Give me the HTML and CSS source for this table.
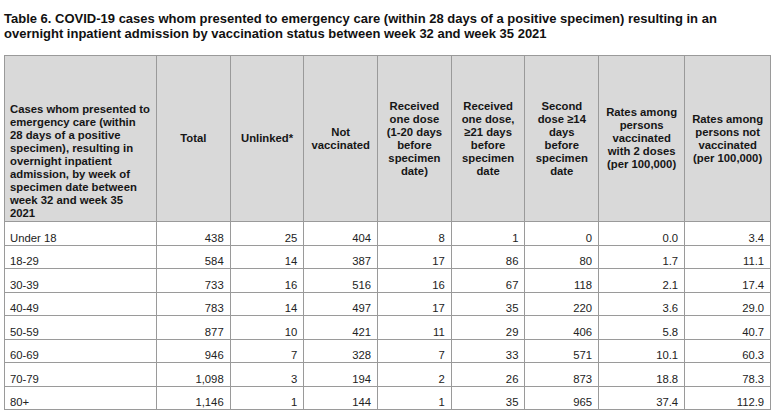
FILE: index.html
```html
<!DOCTYPE html>
<html lang="en">
<head>
<meta charset="utf-8">
<title>Table 6</title>
<link rel="stylesheet" href="styles.css">
</head>
<body>
<div class="page">
  <h1 class="title">Table 6. COVID-19 cases whom presented to emergency care (within 28 days of a positive specimen) resulting in an<br>overnight inpatient admission by vaccination status between week 32 and week 35 2021</h1>
  <table class="data">
    <colgroup>
      <col class="c-label">
      <col class="c-n">
      <col class="c-n">
      <col class="c-n">
      <col class="c-n">
      <col class="c-n">
      <col class="c-n">
      <col class="c-rate">
      <col class="c-rate">
    </colgroup>
    <thead>
      <tr class="head-row">
        <th class="h-label">Cases whom presented to<br>emergency care (within<br>28 days of a positive<br>specimen), resulting in<br>overnight inpatient<br>admission, by week of<br>specimen date between<br>week 32 and week 35<br>2021</th>
        <th>Total</th>
        <th>Unlinked*</th>
        <th>Not<br>vaccinated</th>
        <th>Received<br>one dose<br>(1-20 days<br>before<br>specimen<br>date)</th>
        <th>Received<br>one dose,<br>≥21 days<br>before<br>specimen<br>date</th>
        <th>Second<br>dose ≥14<br>days<br>before<br>specimen<br>date</th>
        <th>Rates among<br>persons<br>vaccinated<br>with 2 doses<br>(per 100,000)</th>
        <th>Rates among<br>persons not<br>vaccinated<br>(per 100,000)</th>
      </tr>
    </thead>
    <tbody>
      <tr><td class="label">Under 18</td><td>438</td><td>25</td><td>404</td><td>8</td><td>1</td><td>0</td><td>0.0</td><td>3.4</td></tr>
      <tr><td class="label">18-29</td><td>584</td><td>14</td><td>387</td><td>17</td><td>86</td><td>80</td><td>1.7</td><td>11.1</td></tr>
      <tr><td class="label">30-39</td><td>733</td><td>16</td><td>516</td><td>16</td><td>67</td><td>118</td><td>2.1</td><td>17.4</td></tr>
      <tr><td class="label">40-49</td><td>783</td><td>14</td><td>497</td><td>17</td><td>35</td><td>220</td><td>3.6</td><td>29.0</td></tr>
      <tr><td class="label">50-59</td><td>877</td><td>10</td><td>421</td><td>11</td><td>29</td><td>406</td><td>5.8</td><td>40.7</td></tr>
      <tr><td class="label">60-69</td><td>946</td><td>7</td><td>328</td><td>7</td><td>33</td><td>571</td><td>10.1</td><td>60.3</td></tr>
      <tr><td class="label">70-79</td><td>1,098</td><td>3</td><td>194</td><td>2</td><td>26</td><td>873</td><td>18.8</td><td>78.3</td></tr>
      <tr><td class="label">80+</td><td>1,146</td><td>1</td><td>144</td><td>1</td><td>35</td><td>965</td><td>37.4</td><td>112.9</td></tr>
    </tbody>
  </table>
</div>
</body>
</html>
```
FILE: styles.css
```css
html, body {
  margin: 0;
  padding: 0;
  background: #ffffff;
}

.page {
  padding: 11px 4px 0 4px;
  font-family: "Liberation Sans", Arial, sans-serif;
  color: #151515;
}

.title {
  margin: 0 0 14px 0;
  font-size: 13px;
  line-height: 15px;
  font-weight: bold;
  color: #111111;
}

.data {
  border-collapse: collapse;
  table-layout: fixed;
  width: 766px;
  font-size: 11.3px;
  line-height: 13px;
}

.c-label { width: 152px; }
.c-n { width: 73.7px; }
.c-rate { width: 86px; }

.data th,
.data td {
  border: 1px solid #9a9a9a;
}

.head-row {
  height: 166px;
}

.data th {
  background: #d9d9d9;
  font-weight: bold;
  text-align: center;
  vertical-align: middle;
  padding: 0 3px;
  color: #161616;
}

.data th.h-label {
  text-align: left;
  vertical-align: bottom;
  padding: 0 3px 1px 5px;
}

.data tbody tr {
  height: 23.5px;
}

.data td {
  text-align: right;
  vertical-align: bottom;
  padding: 0 6px 0 6px;
  color: #222222;
}

.data td.label {
  text-align: left;
  padding-left: 5px;
}
```
